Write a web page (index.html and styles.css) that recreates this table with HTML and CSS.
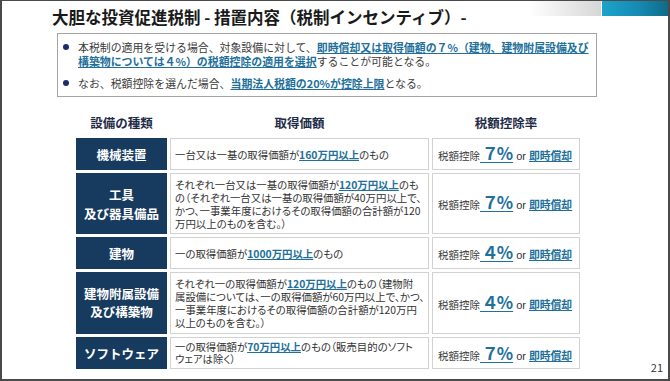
FILE: index.html
```html
<!DOCTYPE html>
<html lang="ja">
<head>
<meta charset="utf-8">
<link rel="stylesheet" href="styles.css">
</head>
<body>
<div class="slide">
  <div class="header">
    <h1 class="title">大胆な投資促進税制 - 措置内容（税制インセンティブ）-</h1>
    <div class="fade"></div>
    <div class="teal"></div>
  </div>

  <div class="box">
    <ul class="bullets">
      <li><span class="mark"><span class="dot"></span></span><span class="btext">本税制の適用を受ける場合、対象設備に対して、<span class="link">即時償却又は取得価額の７%（建物、建物附属設備及び<br>構築物については４%）の税額控除の適用を選択</span>することが可能となる。</span></li>
      <li><span class="mark"><span class="dot"></span></span><span class="btext">なお、税額控除を選んだ場合、<span class="link">当期法人税額の20%が控除上限</span>となる。</span></li>
    </ul>
  </div>

  <div class="main">
    <div class="table">
      <div class="thead">
        <div class="th">設備の種類</div>
        <div class="th">取得価額</div>
        <div class="th">税額控除率</div>
      </div>
      <div class="grid">
        <div class="kind">機械装置</div>
        <div class="cond"><div class="ct">一台又は一基の取得価額が<span class="link">160万円以上</span>のもの</div></div>
        <div class="rate"><div class="rt"><span class="lbl">税額控除</span><span class="pct">&nbsp;７%</span><span class="or">or</span><span class="link">即時償却</span></div></div>

        <div class="kind">工具<br>及び器具備品</div>
        <div class="cond"><div class="ct">それぞれ一台又は一基の取得価額が<span class="link">120万円以上</span>のも<br>の（それぞれ一台又は一基の取得価額が40万円以上で、<br>かつ、一事業年度におけるその取得価額の合計額が120<br>万円以上のものを含む。）</div></div>
        <div class="rate"><div class="rt"><span class="lbl">税額控除</span><span class="pct">&nbsp;７%</span><span class="or">or</span><span class="link">即時償却</span></div></div>

        <div class="kind">建物</div>
        <div class="cond"><div class="ct">一の取得価額が<span class="link">1000万円以上</span>のもの</div></div>
        <div class="rate"><div class="rt"><span class="lbl">税額控除</span><span class="pct">&nbsp;４%</span><span class="or">or</span><span class="link">即時償却</span></div></div>

        <div class="kind k2">建物附属設備<br>及び構築物</div>
        <div class="cond"><div class="ct">それぞれ一の取得価額が<span class="link">120万円以上</span>のもの（建物附<br>属設備については、一の取得価額が60万円以上で、かつ、<br>一事業年度におけるその取得価額の合計額が120万円<br>以上のものを含む。）</div></div>
        <div class="rate"><div class="rt"><span class="lbl">税額控除</span><span class="pct">&nbsp;４%</span><span class="or">or</span><span class="link">即時償却</span></div></div>

        <div class="kind">ソフトウェア</div>
        <div class="cond c5"><div class="ct">一の取得価額が<span class="link">70万円以上</span>のもの（販売目的のソフト<br>ウェアは除く）</div></div>
        <div class="rate r5"><div class="rt"><span class="lbl">税額控除</span><span class="pct">&nbsp;７%</span><span class="or">or</span><span class="link">即時償却</span></div></div>
      </div>
    </div>
    <div class="pageno">21</div>
  </div>
</div>
</body>
</html>
```

FILE: styles.css
```css
html, body {
  margin: 0;
  padding: 0;
  background: #ffffff;
}
body {
  font-family: "Noto Sans CJK JP", "Noto Sans", sans-serif;
  color: #333333;
}
.slide {
  width: 670px;
  height: 381px;
  box-sizing: border-box;
  border: 2px solid #4a4a4a;
  border-top-width: 1px;
  background: #ffffff;
  display: flex;
  flex-direction: column;
}
.header {
  height: 32px;
  display: flex;
  align-items: flex-start;
}
.title {
  margin: 6px 0 0 50px;
  font-size: 16.5px;
  line-height: 20px;
  font-weight: 700;
  color: #1a1a1a;
  white-space: nowrap;
}
.fade {
  margin-left: auto;
  width: 72px;
  height: 15px;
  background: linear-gradient(to right, #ffffff, #d6d6d6);
}
.teal {
  margin-left: 1px;
  width: 66px;
  height: 15px;
  background: linear-gradient(to right, #1ca3cb, #168ab3 55%, #0f6b87);
}
.box {
  margin-left: 55px;
  width: 540px;
  height: 64px;
  box-sizing: border-box;
  border: 1px solid #a3a3a3;
  padding-top: 6px;
}
.bullets {
  list-style: none;
  margin: 0;
  padding: 0;
  display: flex;
  flex-direction: column;
  gap: 8px;
}
.bullets li {
  display: flex;
  font-size: 10.9px;
  line-height: 14px;
  color: #3a3a3a;
}
.mark {
  width: 20px;
  flex: none;
  display: flex;
  align-items: flex-start;
  padding-top: 4px;
  box-sizing: border-box;
}
.dot {
  margin-left: 5px;
  width: 6px;
  height: 6px;
  border-radius: 50%;
  background: #1c2b6b;
}
.btext {
  white-space: nowrap;
}
.link {
  color: #216f9a;
  font-weight: 700;
  text-decoration: underline;
  text-underline-offset: 1px;
}
.main {
  display: flex;
  margin-top: 18px;
}
.table {
  margin-left: 74px;
}
.thead {
  display: grid;
  grid-template-columns: 91px 259px 148px;
  column-gap: 3px;
  height: 16px;
  margin-bottom: 7px;
}
.th {
  text-align: center;
  font-size: 12.5px;
  line-height: 16px;
  font-weight: 700;
  color: #1f2c48;
}
.grid {
  display: grid;
  grid-template-columns: 91px 259px 148px;
  grid-template-rows: 32px 61px 32px 62px 32px;
  gap: 3px;
}
.kind {
  background: #173a5f;
  color: #ffffff;
  font-weight: 700;
  font-size: 12.5px;
  line-height: 19px;
  display: flex;
  align-items: center;
  justify-content: center;
  text-align: center;
}
.kind.k2 {
  line-height: 18px;
}
.cond {
  box-sizing: border-box;
  border: 1px solid #d2d2d2;
  padding-left: 4px;
  font-size: 10.4px;
  line-height: 13px;
  color: #333333;
  font-feature-settings: "palt";
  display: flex;
  align-items: center;
  white-space: nowrap;
}
.cond.c5 {
  line-height: 12.5px;
}
.rate {
  box-sizing: border-box;
  border: 1px solid #d2d2d2;
  padding-left: 5px;
  display: flex;
  align-items: center;
  white-space: nowrap;
}
.rate.r5 {
  padding-top: 3px;
}
.rt {
  line-height: 20px;
}
.lbl {
  font-size: 10.5px;
  color: #3a3a3a;
  font-feature-settings: "palt";
}
.pct {
  font-size: 17px;
  font-weight: 700;
  color: #216f9a;
  text-decoration: underline;
  text-underline-offset: 2px;
  text-decoration-thickness: 1px;
  font-feature-settings: "palt";
}
.or {
  font-size: 11px;
  color: #333333;
  margin: 0 3px 0 3px;
  font-family: "Liberation Sans", sans-serif;
}
.rate .link {
  font-size: 10.8px;
}
.pageno {
  margin-left: auto;
  margin-right: 5px;
  align-self: flex-end;
  margin-bottom: -5px;
  font-size: 11px;
  line-height: 14px;
  color: #333333;
}
```
